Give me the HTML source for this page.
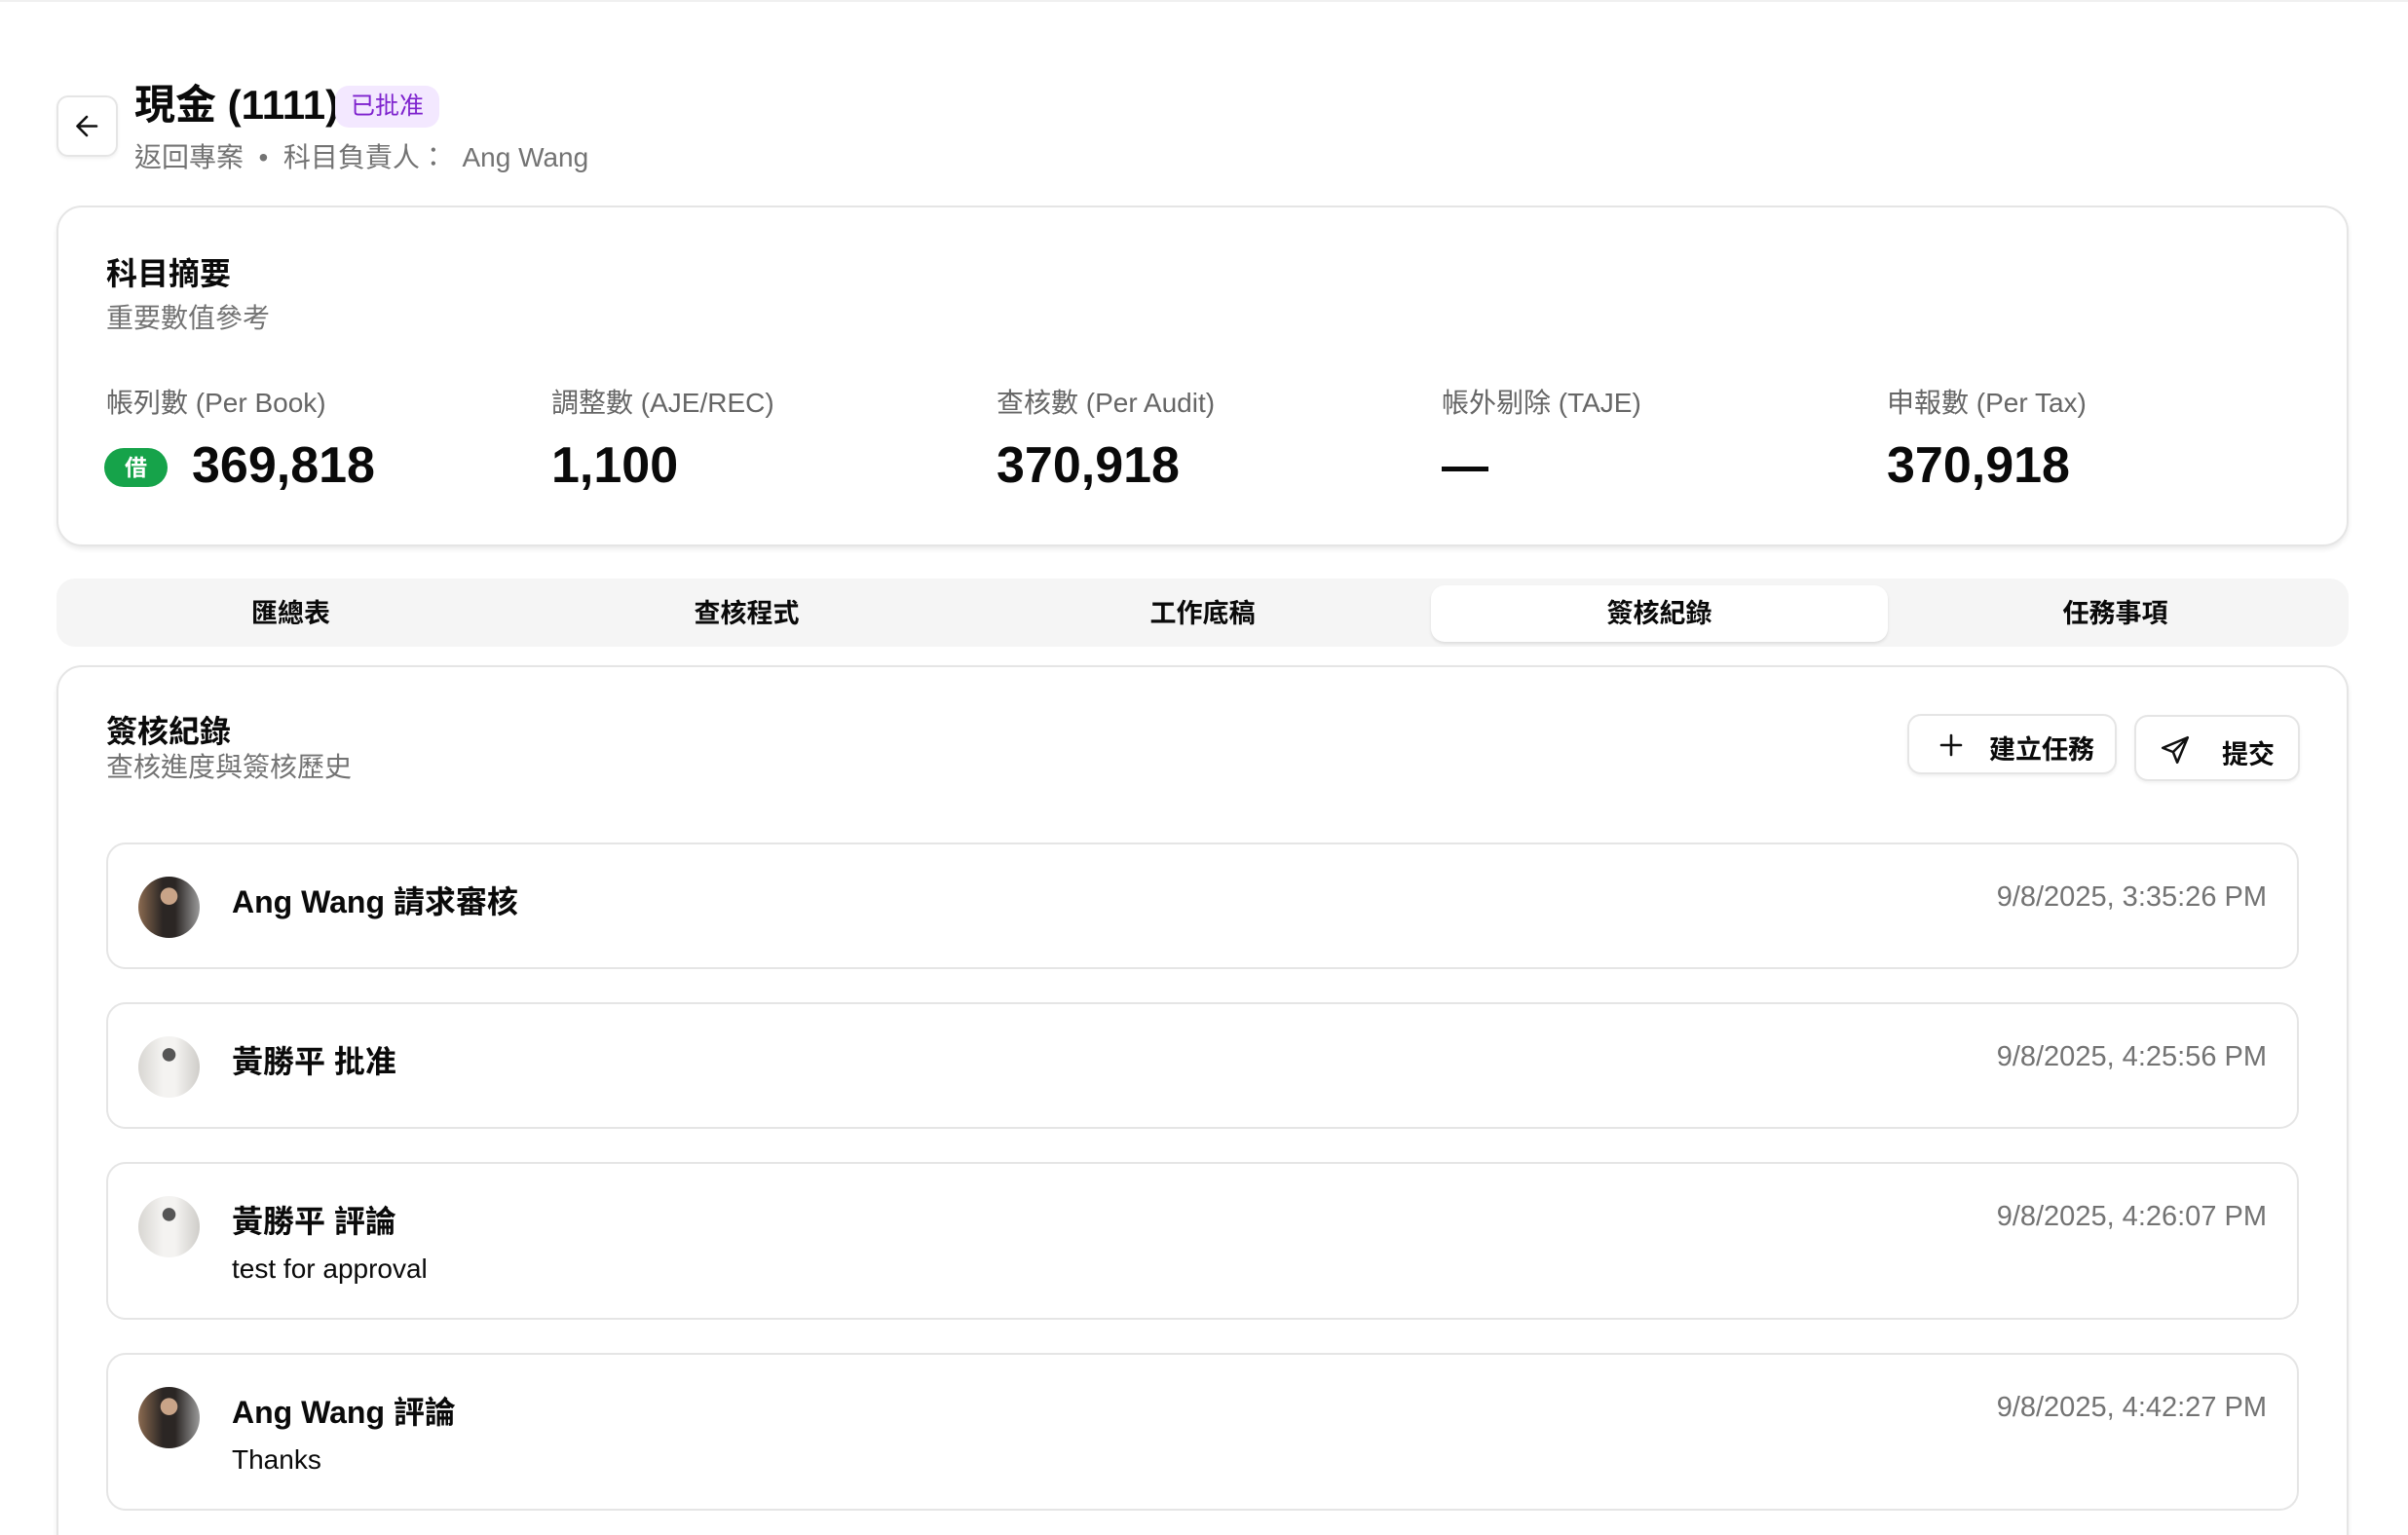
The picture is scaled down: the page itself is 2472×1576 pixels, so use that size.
<!DOCTYPE html>
<html style="overflow:hidden"><head><meta charset="utf-8"><style>
*{box-sizing:border-box;margin:0;padding:0}
html,body{width:2472px;height:1576px;overflow:hidden}
body{background:#fff;font-family:"Liberation Sans","Noto Sans CJK TC",sans-serif;color:#0a0a0a;position:relative}
#w{position:absolute;left:0;top:0;width:2472px;height:1576px;overflow:hidden}
.a{position:absolute;white-space:nowrap}
.card{position:absolute;border:2px solid #e5e5e5;border-radius:26px;background:#fff;box-shadow:0 3px 5px rgba(0,0,0,.08)}
.lbl{font-size:28px;color:#666;top:392px}
.val{font-size:52px;font-weight:700;top:448px}
.tab{position:absolute;top:601px;height:58px;line-height:58px;width:469px;text-align:center;font-size:27px;font-weight:700}
.item{position:absolute;left:109px;width:2251px;border:2px solid #e5e5e5;border-radius:20px;background:#fff}
.av{position:absolute;left:31px;width:63px;height:63px;border-radius:50%}
.t{position:absolute;left:127px;font-size:32px;font-weight:600}
.d{position:absolute;right:31px;font-size:29px;color:#737373}
.b{position:absolute;left:127px;font-size:28px}
.btn{position:absolute;border:2px solid #e5e5e5;border-radius:14px;background:#fff;box-shadow:0 2px 3px rgba(0,0,0,.06);font-size:27px;font-weight:700}
</style></head><body><div id="w">
<div class="a" style="left:0;top:0;width:2472px;height:2px;background:#f0f0f0"></div>
<div class="a" style="left:58px;top:98px;width:63px;height:63px;border:2px solid #e5e5e5;border-radius:12px;box-shadow:0 2px 3px rgba(0,0,0,.06)">
<svg width="59" height="59" viewBox="0 0 59 59" style="position:absolute;left:0;top:0"><path d="M39 29.5H20M29 20l-9.5 9.5L29 39" fill="none" stroke="#111" stroke-width="2.6" stroke-linecap="round" stroke-linejoin="round"/></svg></div>
<div class="a" style="left:138px;top:84px;font-size:42px;font-weight:700;line-height:48px">現金 (1111)</div>
<div class="a" style="left:344px;top:88px;width:107px;height:43px;border-radius:14px;background:#f3e8ff;color:#7e22ce;font-size:25px;line-height:43px;text-align:center">已批准</div>
<div class="a" style="left:138px;top:140px;font-size:28px;color:#737373">返回專案 &nbsp;•&nbsp; 科目負責人： &nbsp;Ang Wang</div>

<div class="card" style="left:58px;top:211px;width:2353px;height:350px"></div>
<div class="a" style="left:109px;top:256px;font-size:32px;font-weight:700">科目摘要</div>
<div class="a" style="left:109px;top:305px;font-size:28px;color:#737373">重要數值參考</div>
<div class="a lbl" style="left:109px">帳列數 (Per Book)</div>
<div class="a lbl" style="left:566px">調整數 (AJE/REC)</div>
<div class="a lbl" style="left:1023px">查核數 (Per Audit)</div>
<div class="a lbl" style="left:1480px">帳外剔除 (TAJE)</div>
<div class="a lbl" style="left:1937px">申報數 (Per Tax)</div>
<div class="a" style="left:107px;top:460px;width:65px;height:40px;border-radius:20px;background:#16a34a;color:#fff;font-size:23px;font-weight:700;line-height:40px;text-align:center">借</div>
<div class="a val" style="left:197px">369,818</div>
<div class="a val" style="left:566px">1,100</div>
<div class="a val" style="left:1023px">370,918</div>
<div class="a" style="left:1480px;top:479px;width:48px;height:5px;background:#0a0a0a"></div>
<div class="a val" style="left:1937px">370,918</div>

<div class="a" style="left:58px;top:594px;width:2353px;height:70px;background:#f5f5f5;border-radius:19px"></div>
<div class="a" style="left:1469px;top:601px;width:469px;height:58px;background:#fff;border-radius:14px;box-shadow:0 2px 3px rgba(0,0,0,.1)"></div>
<div class="tab" style="left:64px">匯總表</div>
<div class="tab" style="left:532px">查核程式</div>
<div class="tab" style="left:1000px">工作底稿</div>
<div class="tab" style="left:1469px">簽核紀錄</div>
<div class="tab" style="left:1937px">任務事項</div>

<div class="card" style="left:58px;top:683px;width:2353px;height:960px"></div>
<div class="a" style="left:109px;top:726px;font-size:32px;font-weight:700">簽核紀錄</div>
<div class="a" style="left:109px;top:766px;font-size:28px;color:#737373">查核進度與簽核歷史</div>
<div class="btn" style="left:1958px;top:733px;width:215px;height:62px">
<svg width="30" height="30" viewBox="0 0 30 30" style="position:absolute;left:28px;top:15px"><path d="M15 5v20M5 15h20" stroke="#111" stroke-width="2.6" stroke-linecap="round"/></svg>
<span style="position:absolute;left:82px;top:13px">建立任務</span></div>
<div class="btn" style="left:2191px;top:734px;width:170px;height:68px">
<svg width="34" height="34" viewBox="0 0 24 24" style="position:absolute;left:23px;top:17px"><path d="M21 3L3 10.5l7.5 3L13.5 21z M21 3l-10.5 10.5" fill="none" stroke="#111" stroke-width="1.8" stroke-linejoin="round" stroke-linecap="round"/></svg>
<span style="position:absolute;left:88px;top:17px">提交</span></div>

<div class="item" style="top:865px;height:130px">
<div class="av" style="top:33px;background:radial-gradient(circle at 50% 32%,#c9a488 0 16%,transparent 17%),linear-gradient(90deg,#8a6a50,#2b2624 40%,#2b2624 60%,#9a9a9a)"></div>
<div class="t" style="top:34px">Ang Wang 請求審核</div><div class="d" style="top:38px">9/8/2025, 3:35:26 PM</div></div>
<div class="item" style="top:1029px;height:130px">
<div class="av" style="top:33px;background:radial-gradient(circle at 50% 30%,#555 0 12%,transparent 13%),linear-gradient(90deg,#d8d6d2,#f4f3f1 40%,#f4f3f1 60%,#cfcdc9)"></div>
<div class="t" style="top:34px">黃勝平 批准</div><div class="d" style="top:38px">9/8/2025, 4:25:56 PM</div></div>
<div class="item" style="top:1193px;height:162px">
<div class="av" style="top:33px;background:radial-gradient(circle at 50% 30%,#555 0 12%,transparent 13%),linear-gradient(90deg,#d8d6d2,#f4f3f1 40%,#f4f3f1 60%,#cfcdc9)"></div>
<div class="t" style="top:34px">黃勝平 評論</div><div class="d" style="top:38px">9/8/2025, 4:26:07 PM</div>
<div class="b" style="top:92px">test for approval</div></div>
<div class="item" style="top:1389px;height:162px">
<div class="av" style="top:33px;background:radial-gradient(circle at 50% 32%,#c9a488 0 16%,transparent 17%),linear-gradient(90deg,#8a6a50,#2b2624 40%,#2b2624 60%,#9a9a9a)"></div>
<div class="t" style="top:34px">Ang Wang 評論</div><div class="d" style="top:38px">9/8/2025, 4:42:27 PM</div>
<div class="b" style="top:92px">Thanks</div></div>
</div></body></html>
